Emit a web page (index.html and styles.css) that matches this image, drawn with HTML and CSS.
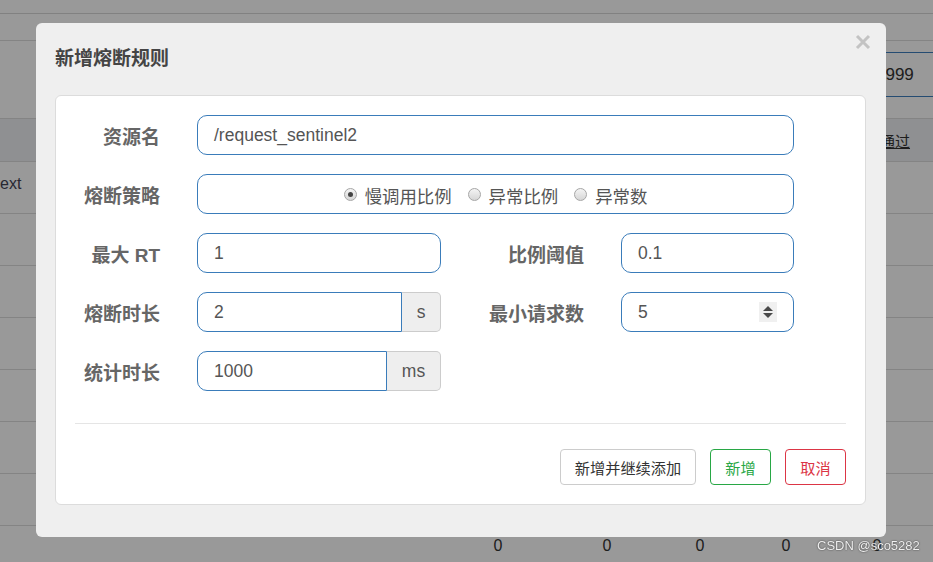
FILE: index.html
```html
<!DOCTYPE html>
<html lang="zh-CN">
<head>
<meta charset="utf-8">
<title>新增熔断规则</title>
<link rel="stylesheet" href="styles.css">
</head>
<body>
<div class="page">
  <div class="topbar"></div>
  <div class="nav"></div>
  <div class="toolbar">
    <div class="search">9999</div>
  </div>
  <div class="grid">
    <div class="grid-head"><span></span><span class="link">通过</span></div>
    <div class="grid-row"><span class="cut">ext</span></div>
    <div class="grid-row"></div>
    <div class="grid-row"></div>
    <div class="grid-row"></div>
    <div class="grid-row"></div>
    <div class="grid-row"></div>
    <div class="grid-row"></div>
    <div class="grid-row nums"><span></span><span>0</span><span>0</span><span>0</span><span>0</span><span>0</span></div>
  </div>
</div>

<div class="mask"></div>

<div class="modal">
  <div class="modal-header">
    <h4 class="modal-title">新增熔断规则</h4>
    <svg class="close" width="16" height="16" viewBox="0 0 16 16"><path d="M2 2 L14 14 M14 2 L2 14" stroke="#c3c3c3" stroke-width="3" fill="none"/></svg>
  </div>
  <div class="panel">
    <div class="form">
      <label class="lbl">资源名</label>
      <div class="field wide"><div class="input">/request_sentinel2</div></div>

      <label class="lbl">熔断策略</label>
      <div class="field wide">
        <div class="input radios">
          <span class="radio checked"></span><span class="rtext">慢调用比例</span>
          <span class="radio"></span><span class="rtext">异常比例</span>
          <span class="radio"></span><span class="rtext">异常数</span>
        </div>
      </div>

      <label class="lbl">最大 RT</label>
      <div class="field"><div class="input">1</div></div>
      <label class="lbl">比例阈值</label>
      <div class="field"><div class="input">0.1</div></div>

      <label class="lbl">熔断时长</label>
      <div class="field group"><div class="input left">2</div><div class="addon">s</div></div>
      <label class="lbl">最小请求数</label>
      <div class="field"><div class="input spin-input"><span>5</span><span class="spinner"><i class="up"></i><i class="down"></i></span></div></div>

      <label class="lbl">统计时长</label>
      <div class="field group"><div class="input left">1000</div><div class="addon ms">ms</div></div>
    </div>
    <div class="sep"></div>
    <div class="actions">
      <button class="btn btn-default">新增并继续添加</button>
      <button class="btn btn-green">新增</button>
      <button class="btn btn-red">取消</button>
    </div>
  </div>
</div>

<div class="watermark">CSDN @sco5282</div>
</body>
</html>
```

FILE: styles.css
```css
* { box-sizing: border-box; }
html, body { margin: 0; padding: 0; }
body {
  width: 933px;
  height: 562px;
  overflow: hidden;
  font-family: "Liberation Sans", Arial, "Noto Sans CJK SC", sans-serif;
  color: #333;
  background: #fff;
}

/* background page */
.page { width: 933px; }
.topbar { height: 14px; border-bottom: 1px solid #d8d8d8; }
.nav { height: 27px; border-bottom: 1px solid #dcdcdc; }
.toolbar {
  height: 77px;
  display: flex;
  justify-content: flex-end;
  align-items: flex-start;
  padding-top: 11px;
}
.search {
  width: 90px;
  height: 45px;
  margin-right: -15px;
  border: 1px solid #3f7fbf;
  border-radius: 4px;
  padding: 0 0 0 17px;
  line-height: 43px;
  font-size: 17px;
  color: #333;
}
.grid { border-top: 1px solid #ddd; }
.grid-head {
  height: 43px;
  background: #eef0f3;
  border-bottom: 1px solid #ddd;
  display: grid;
  grid-template-columns: 880px 1fr;
  align-items: center;
  font-family: "Noto Sans CJK SC", sans-serif;
  font-size: 15px;
}
.link { text-decoration: underline; color: #333; }
.grid-row {
  height: 52px;
  border-bottom: 1px solid #ddd;
  display: grid;
  grid-template-columns: 440px 116px 102px 84px 88px 94px 1fr;
  align-items: center;
  font-size: 16px;
}
.cut { color: #445; margin-top: -8px; }
.nums { align-items: start; }
.nums span { text-align: center; color: #333; padding-top: 11px; }

.mask {
  position: fixed;
  inset: 0;
  background: rgba(0, 0, 0, 0.4);
}

/* modal */
.modal {
  position: fixed;
  left: 36px;
  top: 23px;
  width: 850px;
  height: 514px;
  background: #efefef;
  border-radius: 6px;
  padding: 0 20px 0 19px;
}
.modal-header {
  height: 66px;
  margin-bottom: 6px;
  display: flex;
  align-items: center;
}
.modal-title {
  margin: 0;
  font-family: "Noto Sans CJK SC", sans-serif;
  font-weight: 700;
  font-size: 19px;
  color: #444;
}
.close {
  position: absolute;
  right: 15px;
  top: 11px;
}
.panel {
  background: #fff;
  border: 1px solid #dcdcdc;
  border-radius: 6px;
  padding: 19px 19px 19px 19px;
}
.form {
  display: grid;
  grid-template-columns: 122px 244px 180px 173px;
  row-gap: 19px;
  align-items: center;
}
.lbl {
  font-family: "Liberation Sans", "Noto Sans CJK SC", sans-serif;
  font-weight: 700;
  font-size: 19px;
  color: #666;
  text-align: right;
  padding-right: 37px;
  white-space: nowrap;
}
.field { height: 40px; display: flex; }
.field.wide { grid-column: 2 / 5; }
.input {
  flex: 1;
  height: 40px;
  border: 1px solid #3a7cba;
  border-radius: 10px;
  padding: 0 16px;
  font-size: 17.5px;
  line-height: 38px;
  color: #555;
  background: #fff;
  white-space: nowrap;
}
.input.left { border-radius: 10px 0 0 10px; }
.group .addon {
  width: 39px;
  height: 40px;
  background: #eee;
  border: 1px solid #ccc;
  border-left: none;
  border-radius: 0 5px 5px 0;
  font-size: 17.5px;
  line-height: 38px;
  color: #555;
  text-align: center;
}
.group .addon.ms { width: 54px; }

.radios {
  display: flex;
  justify-content: center;
  align-items: center;
  font-family: "Noto Sans CJK SC", sans-serif;
  font-size: 17.4px;
  line-height: 1;
  padding-top: 3px;
}
.radio {
  width: 13px;
  height: 13px;
  border-radius: 50%;
  border: 1px solid #a6a6a6;
  background: linear-gradient(#f4f4f4, #d6d6d6);
  margin-right: 8px;
  display: flex;
  align-items: center;
  justify-content: center;
  margin-top: -2px;
}
.radio.checked::after {
  content: "";
  width: 5px;
  height: 5px;
  border-radius: 50%;
  background: #444;
}
.rtext { margin-right: 16px; color: #555; }
.rtext:last-child { margin-right: 0; }

.spin-input {
  display: flex;
  justify-content: space-between;
  align-items: center;
}
.spinner {
  width: 18px;
  height: 20px;
  background: #f0f0f0;
  display: flex;
  flex-direction: column;
  align-items: center;
  justify-content: center;
  gap: 2px;
}
.spinner i {
  display: block;
  width: 0;
  height: 0;
  border-left: 5px solid transparent;
  border-right: 5px solid transparent;
}
.spinner .up { border-bottom: 5px solid #4a4a4a; }
.spinner .down { border-top: 5px solid #4a4a4a; }

.sep {
  margin-top: 32px;
  border-top: 1px solid #e5e5e5;
}
.actions {
  margin-top: 25px;
  display: flex;
  justify-content: flex-end;
  gap: 14px;
}
.btn {
  height: 36px;
  padding: 0 15px;
  border-radius: 4px;
  background: #fff;
  font-family: "Noto Sans CJK SC", sans-serif;
  font-size: 15.2px;
  line-height: 34px;
  border: 1px solid #ccc;
  color: #333;
  cursor: pointer;
}
.btn-default { width: 136px; padding: 0; }
.btn-green { width: 61px; padding: 0; border-color: #28a745; color: #28a745; }
.btn-red { width: 61px; padding: 0; border-color: #dc3545; color: #dc3545; }

.watermark {
  position: fixed;
  left: 817px;
  top: 538px;
  font-family: "Liberation Sans", Arial, sans-serif;
  font-size: 13px;
  color: #f0f0f0;
  text-shadow: 0 0 2px #555, 0 0 1px #444;
}
```
